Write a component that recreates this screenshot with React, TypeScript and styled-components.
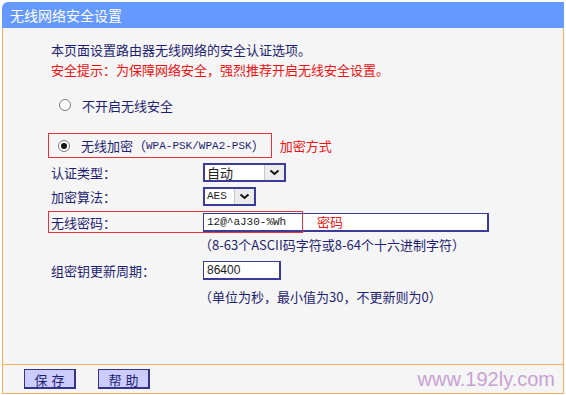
import styled, { createGlobalStyle } from 'styled-components';

const GlobalStyle = createGlobalStyle`
  body {
    margin: 0;
    background: #fff;
    font-family: "Noto Sans CJK SC", "Liberation Sans", sans-serif;
  }
`;

const Frame = styled.div`
  width: 562px;
  margin: 2px 0 0 2px;
`;

const Header = styled.div`
  height: 26px;
  line-height: 26px;
  background: #6699ff;
  border-top-left-radius: 6px;
  color: #fff;
  font-size: 14px;
  padding-left: 8px;
`;

const Body = styled.div`
  height: 336px;
  box-sizing: border-box;
  background: #f5f5f5;
  border-left: 1px solid #f4b060;
  border-right: 1px solid #f4b060;
  padding: 12px 0 0 45px;
  color: #1f1f70;
  font-size: 13px;
`;

const Line = styled.div<{ $red?: boolean }>`
  height: 20px;
  line-height: 20px;
  padding-left: 3px;
  color: ${(p) => (p.$red ? '#ee1111' : '#1f1f70')};
`;

const RadioLine = styled.div<{ $top: number }>`
  display: flex;
  align-items: center;
  margin-top: ${(p) => p.$top}px;
`;

const RadioItem = styled.div<{ $boxed?: boolean }>`
  display: inline-flex;
  align-items: center;
  height: ${(p) => (p.$boxed ? 25 : 20)}px;
  box-sizing: border-box;
  padding: 0 6px 0 ${(p) => (p.$boxed ? 9 : 10)}px;
  border: 1px solid ${(p) => (p.$boxed ? '#e8323c' : 'transparent')};
`;

const Radio = styled.span<{ $checked?: boolean }>`
  width: 12px;
  height: 12px;
  box-sizing: border-box;
  border-radius: 50%;
  border: 1px solid #7a7a7a;
  background: #fff;
  margin-right: 11px;
  display: inline-flex;
  align-items: center;
  justify-content: center;
  &::after {
    content: '';
    width: 6px;
    height: 6px;
    border-radius: 50%;
    background: ${(p) => (p.$checked ? '#111' : 'transparent')};
  }
`;

const Mono = styled.span`
  font-family: "Liberation Mono", monospace;
  font-size: 11px;
`;

const Note = styled.span`
  color: #ee1111;
  margin-left: 8px;
`;

const Row = styled.div<{ $top: number; $h?: number }>`
  position: relative;
  display: grid;
  grid-template-columns: 152px auto;
  align-items: center;
  height: ${(p) => p.$h ?? 24}px;
  margin-top: ${(p) => p.$top}px;
  padding-left: 3px;
`;

const Label = styled.div`
  white-space: nowrap;
`;

const Select = styled.div<{ $w: number }>`
  width: ${(p) => p.$w}px;
  height: 19px;
  box-sizing: border-box;
  border: 2px solid #3b3b9c;
  background: #fff;
  display: flex;
  align-items: center;
  justify-content: space-between;
  color: #222;
`;

const SelectText = styled.span<{ $mono?: boolean }>`
  padding-left: 2px;
  font-size: ${(p) => (p.$mono ? 11 : 13)}px;
  font-family: ${(p) =>
    p.$mono ? '"Liberation Mono", monospace' : '"Noto Sans CJK SC", sans-serif'};
`;

const Arrow = styled.span`
  width: 19px;
  height: 15px;
  background: #ececec;
  border-left: 1px solid #c8c8c8;
  display: flex;
  align-items: center;
  justify-content: center;
`;

const Input = styled.div<{ $w: number; $mono?: boolean }>`
  width: ${(p) => p.$w}px;
  height: 19px;
  box-sizing: border-box;
  border: 1px solid #3b3b9c;
  border-width: 1px 2px 2px 1px;
  background: #fff;
  padding-left: 3px;
  display: flex;
  align-items: center;
  color: #1a1a1a;
  font-size: ${(p) => (p.$mono ? 11 : 12)}px;
  font-family: ${(p) =>
    p.$mono ? '"Liberation Mono", monospace' : '"Liberation Sans", sans-serif'};
`;

const Hint = styled.div`
  grid-column: 2;
  white-space: nowrap;
  margin-left: -4px;
`;

const MarkBox = styled.div`
  position: absolute;
  left: 0;
  top: 1px;
  width: 255px;
  height: 22px;
  box-sizing: border-box;
  border: 1px solid #e8323c;
  pointer-events: none;
`;

const MarkText = styled.span`
  position: absolute;
  left: 269px;
  top: 0;
  line-height: 24px;
  color: #ee1111;
`;

const Footer = styled.div`
  height: 28px;
  border: 1px solid #f4b060;
  background: #f5f5f5;
  display: flex;
  align-items: center;
  padding: 0 8px 0 21px;
  gap: 22px;
`;

const Button = styled.button`
  width: 52px;
  height: 20px;
  padding: 0;
  background: #ccccff;
  border: 1px solid #33338a;
  border-width: 1px 2px 2px 1px;
  color: #1f1f70;
  font-family: "Noto Sans CJK SC", sans-serif;
  font-size: 13px;
  letter-spacing: 4px;
  text-indent: 4px;
`;

const Watermark = styled.span`
  margin-left: auto;
  font-family: "Liberation Sans", Arial, sans-serif;
  font-size: 20px;
  color: #c9a2d4;
`;

const Chevron = () => (
  <svg width="11" height="7" viewBox="0 0 11 7">
    <polyline points="1.5,1.5 5.5,5 9.5,1.5" fill="none" stroke="#111" strokeWidth="2" />
  </svg>
);

export default function App() {
  return (
    <>
      <GlobalStyle />
      <Frame>
        <Header>无线网络安全设置</Header>
        <Body>
          <Line>本页面设置路由器无线网络的安全认证选项。</Line>
          <Line $red>安全提示：为保障网络安全，强烈推荐开启无线安全设置。</Line>
          <RadioLine $top={15}>
            <RadioItem>
              <Radio />
              不开启无线安全
            </RadioItem>
          </RadioLine>
          <RadioLine $top={18}>
            <RadioItem $boxed>
              <Radio $checked />
              无线加密（<Mono>WPA-PSK/WPA2-PSK</Mono>）
            </RadioItem>
            <Note>加密方式</Note>
          </RadioLine>
          <Row $top={2}>
            <Label>认证类型：</Label>
            <Select $w={83}>
              <SelectText>自动</SelectText>
              <Arrow><Chevron /></Arrow>
            </Select>
          </Row>
          <Row $top={0}>
            <Label>加密算法：</Label>
            <Select $w={53}>
              <SelectText $mono>AES</SelectText>
              <Arrow><Chevron /></Arrow>
            </Select>
          </Row>
          <Row $top={2}>
            <Label>无线密码：</Label>
            <Input $w={286} $mono>12@^aJ30-%Wh</Input>
            <MarkBox />
            <MarkText>密码</MarkText>
          </Row>
          <Row $top={0} $h={20}>
            <Hint>（8-63个ASCII码字符或8-64个十六进制字符）</Hint>
          </Row>
          <Row $top={4}>
            <Label>组密钥更新周期：</Label>
            <Input $w={78}>86400</Input>
          </Row>
          <Row $top={4} $h={20}>
            <Hint>（单位为秒，最小值为30，不更新则为0）</Hint>
          </Row>
        </Body>
        <Footer>
          <Button>保存</Button>
          <Button>帮助</Button>
          <Watermark>www.192ly.com</Watermark>
        </Footer>
      </Frame>
    </>
  );
}
